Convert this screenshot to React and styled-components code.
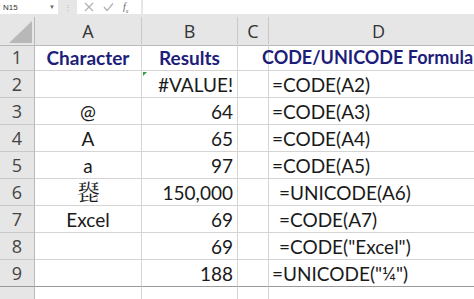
import styled, { createGlobalStyle } from 'styled-components';

const GlobalStyle = createGlobalStyle`
  html, body {
    margin: 0;
    padding: 0;
    background: #ffffff;
    overflow: hidden;
  }
  * {
    box-sizing: border-box;
  }
`;

const Window = styled.div`
  width: 474px;
  height: 299px;
  overflow: hidden;
  background: #ffffff;
  font-family: Lato, 'Noto Sans', 'Noto Sans CJK SC', sans-serif;
`;

const FormulaBar = styled.div`
  display: flex;
  align-items: stretch;
  height: 17px;
  padding-bottom: 3px;
  background: #e6e6e6;
`;

const NameBox = styled.div`
  display: flex;
  align-items: center;
  justify-content: space-between;
  width: 58px;
  padding: 0 3px 0 3px;
  background: #ffffff;
  font-family: 'Liberation Sans', Arial, sans-serif;
  font-size: 8px;
  color: #333333;

  .arrow {
    font-size: 6px;
    color: #666666;
  }
`;

const Divider = styled.div`
  display: flex;
  align-items: center;
  justify-content: center;
  width: 19px;
  color: #b0b0b0;
  font-size: 8px;
  letter-spacing: -1px;
`;

const Buttons = styled.div`
  display: flex;
  align-items: center;
  gap: 9px;
  width: 64px;
  padding-left: 7px;
  background: #ffffff;
  color: #9a9a9a;
`;

const FxLabel = styled.span`
  font-family: 'Liberation Serif', serif;
  font-style: italic;
  font-size: 10px;
  color: #666666;

  sub {
    font-size: 6px;
  }
`;

const FormulaInput = styled.div`
  flex: 1;
  margin-left: 2px;
  background: #ffffff;
`;

const Sheet = styled.div`
  display: grid;
  grid-template-columns: 35px 107px 96px 31px 220px;
  grid-auto-rows: 27px;
`;

const HeaderCell = styled.div`
  position: relative;
  display: flex;
  align-items: center;
  justify-content: center;
  height: 29px;
  background: #e6e6e6;
  border-right: 1px solid #c9c9c9;
  border-bottom: 1px solid #b9b9b9;
  color: #333333;
  font-family: 'Open Sans', sans-serif;
  font-size: 18px;
`;

const Corner = styled(HeaderCell)`
  border-right: 1px solid #b9b9b9;

  svg {
    position: absolute;
    right: 2px;
    bottom: 2px;
  }
`;

const RowNum = styled.div`
  display: flex;
  align-items: center;
  justify-content: center;
  background: #e6e6e6;
  border-right: 1px solid #b9b9b9;
  border-bottom: 1px solid ${(p) => (p.$last ? '#9a9a9a' : '#c9c9c9')};
  color: #444444;
  font-family: 'Open Sans', sans-serif;
  font-size: 18px;
`;

const Cell = styled.div`
  position: relative;
  display: flex;
  align-items: center;
  justify-content: ${(p) =>
    p.$align === 'right' ? 'flex-end' : p.$align === 'center' ? 'center' : 'flex-start'};
  padding: ${(p) => (p.$align === 'right' ? '0 4px 0 0' : `0 0 0 ${p.$indent || 0}px`)};
  border-right: 1px solid #d4d4d4;
  border-bottom: 1px solid ${(p) => (p.$last ? '#9a9a9a' : '#d4d4d4')};
  white-space: nowrap;
  overflow: visible;
  font-size: ${(p) => p.$size || 19}px;
  font-weight: ${(p) => (p.$bold ? 700 : 400)};
  color: ${(p) => (p.$bold ? '#1d1d7a' : '#1a1a1a')};
  z-index: ${(p) => (p.$front ? 1 : 0)};
`;

const WideTitle = styled.span`
  margin-left: -7px;
  font-size: 18px;
`;

const ErrorMark = styled.span`
  position: absolute;
  top: 1px;
  left: 1px;
  width: 0;
  height: 0;
  border-top: 4px solid #2e9e3e;
  border-right: 4px solid transparent;
`;

const columns = ['A', 'B', 'C', 'D'];

const rows = [
  { a: '', b: '#VALUE!', d: '=CODE(A2)', indent: 3, mark: true },
  { a: '@', b: '64', d: '=CODE(A3)', indent: 3 },
  { a: 'A', b: '65', d: '=CODE(A4)', indent: 3 },
  { a: 'a', b: '97', d: '=CODE(A5)', indent: 3 },
  { a: String.fromCodePoint(150000), b: '150,000', d: '=UNICODE(A6)', indent: 10, size: 23 },
  { a: 'Excel', b: '69', d: '=CODE(A7)', indent: 10 },
  { a: '', b: '69', d: '=CODE("Excel")', indent: 10 },
  { a: '', b: '188', d: '=UNICODE("¼")', indent: 3 },
];

export default function App() {
  return (
    <Window>
      <GlobalStyle />
      <FormulaBar>
        <NameBox>
          <span>N15</span>
          <span className="arrow">▼</span>
        </NameBox>
        <Divider>⋮</Divider>
        <Buttons>
          <svg width="10" height="10" viewBox="0 0 10 10">
            <path d="M1 1 L9 9 M9 1 L1 9" stroke="#b0b0b0" strokeWidth="1.2" />
          </svg>
          <svg width="11" height="10" viewBox="0 0 11 10">
            <path d="M1 5 L4 8.5 L10 1.5" stroke="#b0b0b0" strokeWidth="1.2" fill="none" />
          </svg>
          <FxLabel>
            f<sub>x</sub>
          </FxLabel>
        </Buttons>
        <FormulaInput />
      </FormulaBar>

      <Sheet>
        <Corner>
          <svg width="23" height="22" viewBox="0 0 23 22">
            <polygon points="23,0 23,22 0,22" fill="#b8b8b8" />
          </svg>
        </Corner>
        {columns.map((c) => (
          <HeaderCell key={c}>{c}</HeaderCell>
        ))}

        <RowNum>1</RowNum>
        <Cell $align="center" $bold>
          Character
        </Cell>
        <Cell $align="center" $bold>
          Results
        </Cell>
        <Cell />
        <Cell $bold $indent={0} $front>
          <WideTitle>CODE/UNICODE Formula</WideTitle>
        </Cell>

        {rows.map((r, i) => {
          const last = i === rows.length - 1;
          return [
            <RowNum key={`n${i}`} $last={last}>
              {i + 2}
            </RowNum>,
            <Cell key={`a${i}`} $align="center" $size={r.size} $last={last}>
              {r.a}
            </Cell>,
            <Cell key={`b${i}`} $align="right" $last={last}>
              {r.mark && <ErrorMark />}
              {r.b}
            </Cell>,
            <Cell key={`c${i}`} $last={last} />,
            <Cell key={`d${i}`} $indent={r.indent} $last={last}>
              {r.d}
            </Cell>,
          ];
        })}

        <RowNum />
        <Cell />
        <Cell />
        <Cell />
        <Cell />
      </Sheet>
    </Window>
  );
}
